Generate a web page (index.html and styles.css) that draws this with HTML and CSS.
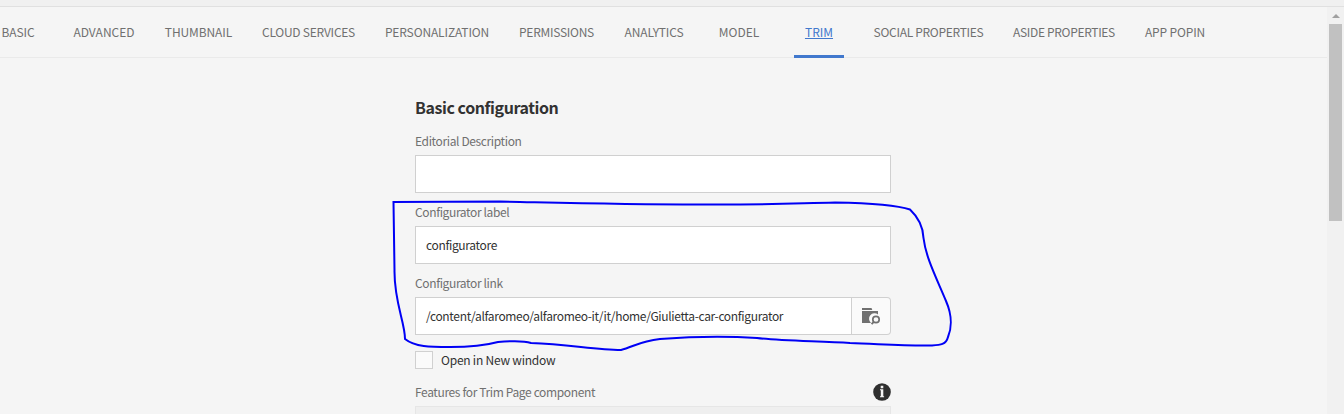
FILE: index.html
```html
<!DOCTYPE html>
<html lang="en">
<head>
<meta charset="utf-8">
<title>Page properties</title>
<link rel="stylesheet" href="styles.css">
</head>
<body>
<div class="topbar"></div>
<div class="panel">
  <main class="content">
    <nav class="tabs">
      <a class="tab basic">BASIC</a>
      <a class="tab advanced">ADVANCED</a>
      <a class="tab thumbnail">THUMBNAIL</a>
      <a class="tab cloud">CLOUD SERVICES</a>
      <a class="tab personalization">PERSONALIZATION</a>
      <a class="tab permissions">PERMISSIONS</a>
      <a class="tab analytics">ANALYTICS</a>
      <a class="tab model">MODEL</a>
      <a class="tab trim active"><span>TRIM</span></a>
      <a class="tab social">SOCIAL PROPERTIES</a>
      <a class="tab aside">ASIDE PROPERTIES</a>
      <a class="tab popin">APP POPIN</a>
    </nav>
    <form class="form">
      <h3 class="heading">Basic configuration</h3>
      <div class="label">Editorial Description</div>
      <div class="field"></div>
      <div class="label">Configurator label</div>
      <div class="field">configuratore</div>
      <div class="label">Configurator link</div>
      <div class="picker">
        <div class="field path">/content/alfaromeo/alfaromeo-it/it/home/Giulietta-car-configurator</div>
        <div class="browse">
          <svg width="19" height="18" viewBox="0 0 19 18">
            <path fill="#707070" d="M0 1h9.500l.8 2H0zM0 4h16v3.600a5.300 5.300 0 0 0-7 8.400H0z"/>
            <circle cx="14" cy="12.500" r="3.200" fill="none" stroke="#707070" stroke-width="1.700"/>
            <path stroke="#707070" stroke-width="1.900" d="M11.800 14.800l-2.200 2.400"/>
          </svg>
        </div>
      </div>
      <div class="check"><span class="box"></span><span class="check-text">Open in New window</span></div>
      <div class="features">
        <div class="label">Features for Trim Page component</div>
        <svg class="info" width="18" height="18" viewBox="0 0 18 18">
          <circle cx="9" cy="9" r="8.8" fill="#2f2f2f"/>
          <path fill="#f4f4f4" d="M7.700 2.800h2.600v2.400H7.700zM7 6.300h3.300v7h.8v1H7v-1h.8v-6H7z"/>
        </svg>
      </div>
      <div class="multifield"></div>
    </form>
  </main>
  <div class="scrollbar">
    <svg class="arrow" width="8" height="5" viewBox="0 0 8 5"><path fill="#a0a0a0" d="M4 0L8 4H0z"/></svg>
    <div class="thumb"></div>
  </div>
</div>
<svg class="ink" width="1344" height="414" viewBox="0 0 1344 414">
  <path d="M392.500 202L500 201.500C570 203 620 204.500 700 204.500C760 205 790 203.500 835 202.500C860 203 895 204.500 910 209.500C918 217 923 225 923.500 238C926 258 936 277 946 301C953 317 951 330 948 337C946 345 940 345 931 345.500C905 346 880 344 850 343C820 341 780 341 757 338C725 336 700 336 660 339C640 341 633 347 621 350C595 350 568 344 531 343C522 340 510 341 498 342C487 345 475 347 450 347C430 347 415 347 405 339C405 322 394 302 394.500 270L393.500 202"/>
</svg>
</body>
</html>
```
FILE: styles.css
```css
* { box-sizing: border-box; }
body {
  margin: 0;
  height: 414px;
  overflow: hidden;
  background: #f5f5f5;
  color: #323232;
  font: 12px/18px "Noto Sans CJK SC", "Noto Sans", sans-serif;
}
.topbar { height: 7px; background: #f0f0f0; border-bottom: 1px solid #e0e0e0; }
.panel { display: flex; height: 407px; }
.content { width: 1327px; overflow: hidden; }
.tabs {
  display: flex;
  gap: 30px;
  height: 51px;
  margin-left: -7px;
  border-bottom: 1px solid #eaeaea;
}
.tab {
  display: flex;
  flex: none;
  justify-content: center;
  height: 51px;
  line-height: 49px;
  white-space: nowrap;
  color: #707070;
}
.basic, .model, .trim { width: 50px; }
.basic { letter-spacing: -.1px; }
.advanced { width: 62px; }
.thumbnail { width: 67px; letter-spacing: -.1px; }
.cloud { width: 93px; letter-spacing: -.25px; }
.personalization { width: 104px; letter-spacing: -.13px; }
.permissions { width: 75px; letter-spacing: -.27px; }
.analytics { width: 60px; letter-spacing: -.15px; }
.social { width: 109px; letter-spacing: -.3px; }
.aside { width: 102px; letter-spacing: -.33px; }
.popin { width: 60px; letter-spacing: -.15px; }
.active { color: #4178cd; border-bottom: 3px solid #4178cd; text-decoration: underline; }
.form { width: 476px; margin-left: 415px; }
.heading { margin: 39px 0 15px; height: 20px; font-size: 16px; line-height: 20px; font-weight: 700; letter-spacing: -.43px; }
.label { height: 23px; line-height: 18px; color: #707070; letter-spacing: -.37px; }
.field {
  width: 476px;
  height: 38px;
  margin-bottom: 10px;
  padding-left: 10px;
  border: 1px solid #d0d0d0;
  background: #fff;
  line-height: 36px;
  letter-spacing: -.34px;
}
.picker { display: flex; margin-bottom: 16px; }
.path { width: 437px; margin: 0; }
.browse {
  display: flex;
  align-items: center;
  justify-content: center;
  width: 39px;
  height: 38px;
  border: 1px solid #d0d0d0;
  border-left: 0;
  border-radius: 0 4px 4px 0;
  background: #fafafa;
}
.check { display: flex; gap: 8px; height: 18px; margin-bottom: 14px; letter-spacing: -.23px; }
.box { width: 18px; height: 18px; border: 1px solid #d0d0d0; background: #fafafa; }
.features { display: flex; justify-content: space-between; height: 23px; }
.multifield { height: 20px; border: 1px solid #e6e6e6; background: #efefef; }
.scrollbar { width: 17px; padding: 7px 2px 0; background: #f1f1f1; }
.arrow { display: block; margin: 0 auto 5px; }
.thumb { width: 13px; height: 197px; background: #c1c1c1; }
.ink { position: absolute; inset: 0; pointer-events: none; }
.ink path { fill: none; stroke: #0000f5; stroke-width: 2; stroke-linejoin: round; }
```
